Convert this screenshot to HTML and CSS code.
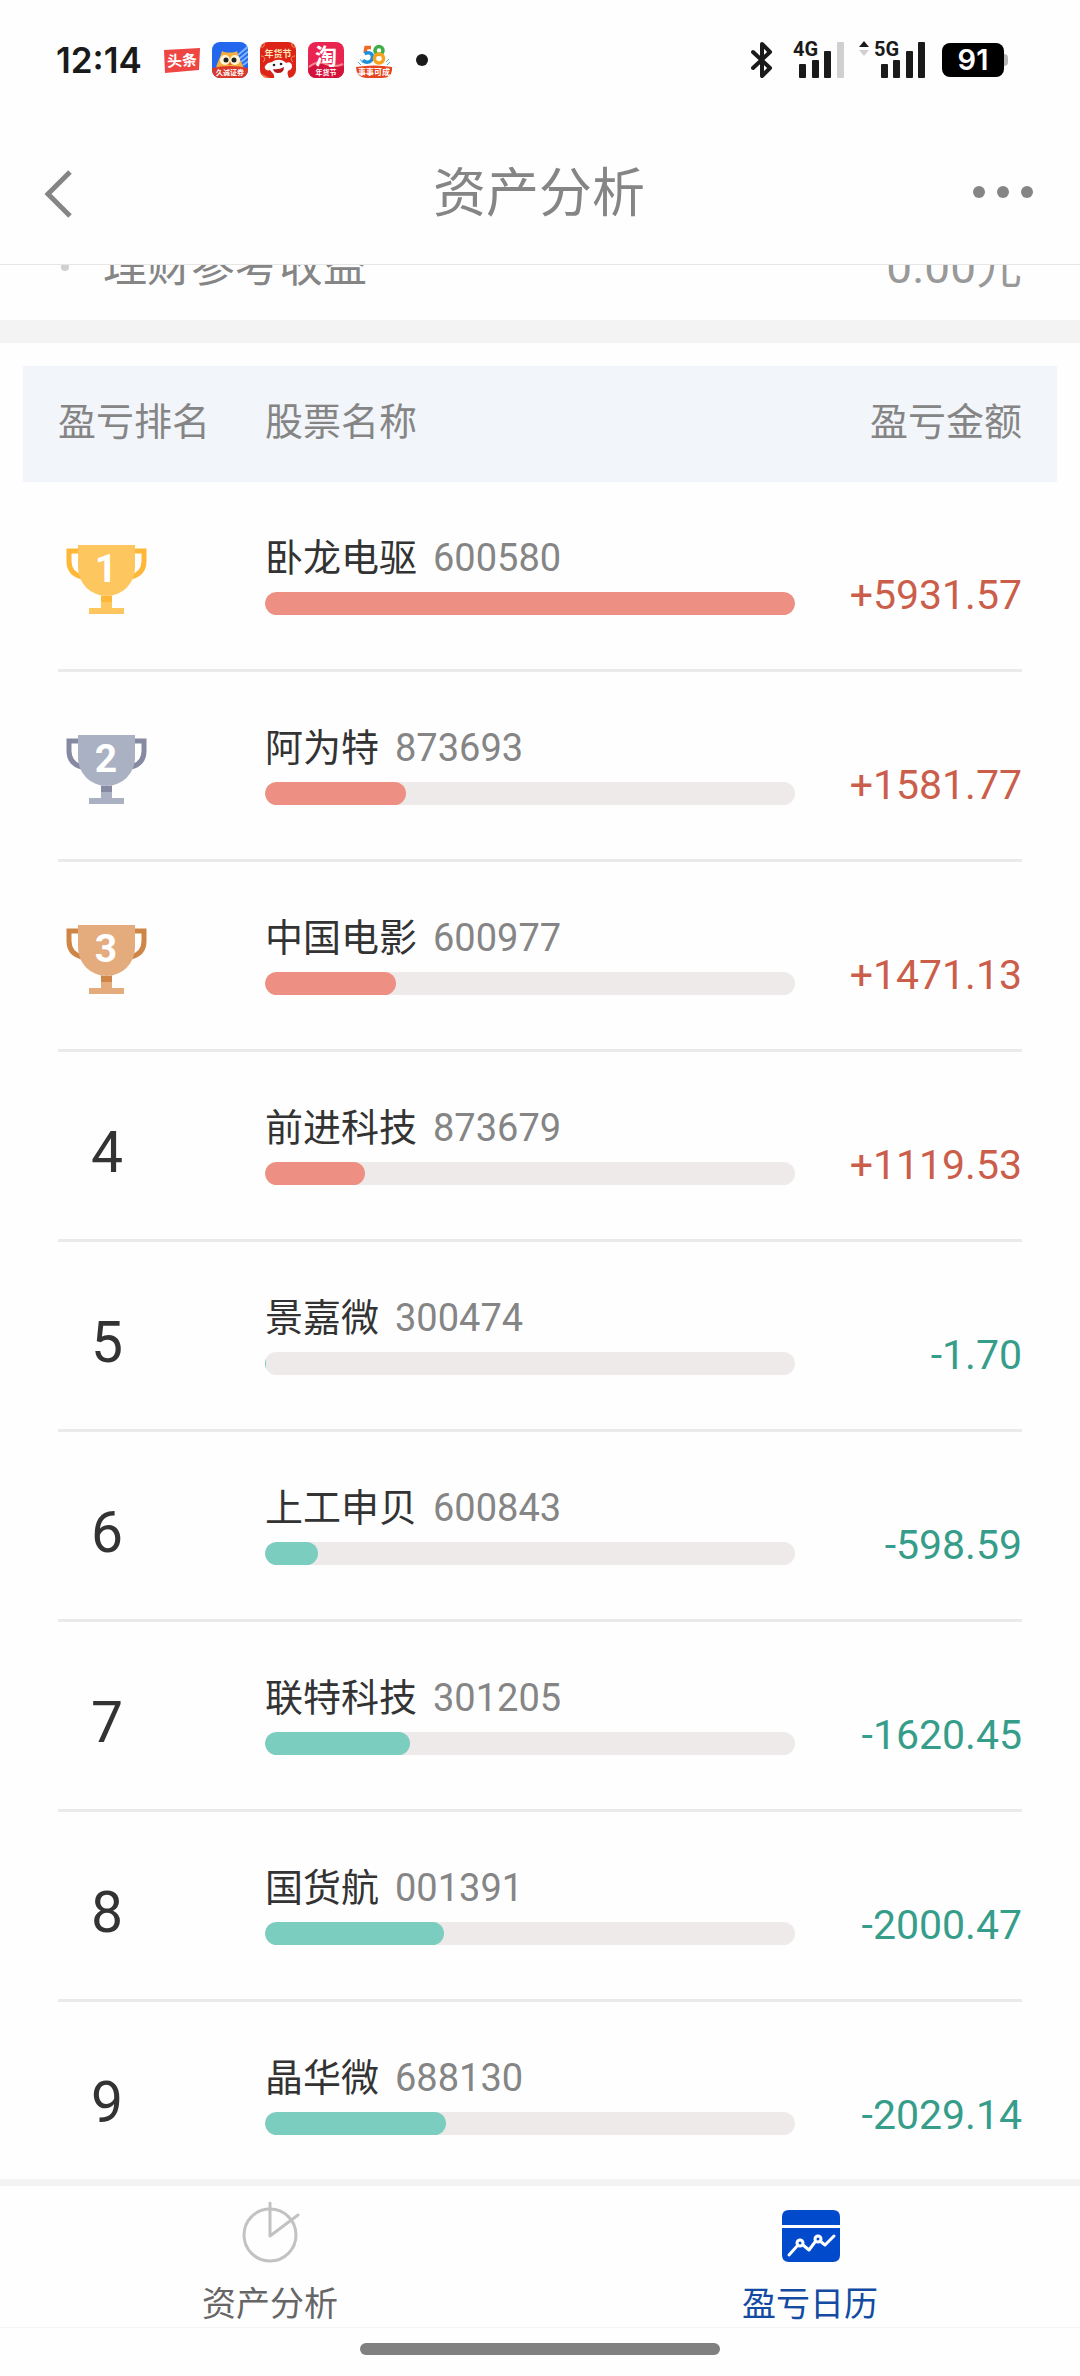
FILE: index.html
```html
<!DOCTYPE html>
<html lang="zh-CN">
<head>
<meta charset="utf-8">
<meta name="viewport" content="width=device-width, initial-scale=1">
<title>资产分析</title>
<link rel="stylesheet" href="styles.css">
</head>
<body>
<svg class="defs" width="0" height="0" aria-hidden="true">
  <symbol id="cup" viewBox="0 0 82 72">
    <g fill="none" stroke="var(--cup-dark)" stroke-width="5">
      <path d="M13 8H3V18C3 27 8 32 16 34"/>
      <path d="M68 8H78V18C78 27 73 32 65 34"/>
    </g>
    <path fill="var(--cup)" d="M12 2H69V24.500A28.500 28.500 0 0 1 12 24.500Z"/>
    <path fill="var(--cup-dark)" d="M35 52.500Q40.500 53.500 46 52.500V59H35Z"/>
    <path fill="var(--cup)" d="M35 59H46V65H58V71H23V65H35Z"/>
  </symbol>
</svg>

<div class="status">
  <span class="clock">12:14</span>
  <div class="notices">
    <svg width="36" height="36" viewBox="0 0 36 36" role="img" aria-label="头条">
      <path d="M0 8L36 6L35 28L1 31Z" fill="#ee4643"/>
      <text x="18" y="24" class="app-text" font-size="15" transform="rotate(-3 18 18)">头条</text>
    </svg>
    <svg width="36" height="36" viewBox="0 0 36 36" role="img" aria-label="久诚证券">
      <clipPath id="round"><rect width="36" height="36" rx="8"/></clipPath>
      <g clip-path="url(#round)">
        <rect width="36" height="36" fill="#2267ee"/>
        <path d="M26 13L38 3M27 17L38 8M29 20L38 13M31 23L38 18" stroke="#7fb4ff" stroke-width="2"/>
        <path d="M4 27C5 20 8 17 10 9C13 11 22 11 25 9C27 17 30 20 32 27Z" fill="#f7ae3e"/>
        <circle cx="13" cy="18" r="5" fill="#fff4d5"/><circle cx="23" cy="18" r="5" fill="#fff4d5"/>
        <circle cx="14" cy="18" r="2.500" fill="#222"/><circle cx="22" cy="18" r="2.500" fill="#222"/>
        <path d="M18 20L16 23H20Z" fill="#e2662a"/>
        <path d="M0 26Q18 22 36 26V36H0Z" fill="#d9392b"/>
      </g>
      <text x="18" y="33" class="app-text" font-size="7">久诚证券</text>
    </svg>
    <svg width="36" height="36" viewBox="0 0 36 36" role="img" aria-label="年货节">
      <g clip-path="url(#round)">
        <rect width="36" height="36" fill="#dd2418"/>
        <path d="M1 14C5 14 6 18 3 20M35 14C31 14 30 18 33 20M1 5Q5 6 4 1M35 5Q31 6 32 1" stroke="#f39a62" stroke-width="1" fill="none"/>
        <path d="M12 20C17 16 24 18 26 21C32 18 34 26 30 28C27 28 27 32 29 36H14C15 32 12 31 10 28C6 30 3 25 6 23C8 20 10 21 12 20Z" fill="#fff"/>
        <circle cx="14" cy="23" r="1.300" fill="#222"/><circle cx="21" cy="22" r="1.300" fill="#222"/>
        <path d="M13 27Q19 28 24 25Q24 31 18 31Q14 31 13 27Z" fill="#b3191a"/>
        <path d="M0 31L10 36H0Z" fill="#ef7c46"/>
      </g>
      <text x="18" y="15" class="app-text cream" font-size="9">年货节</text>
    </svg>
    <svg width="36" height="36" viewBox="0 0 36 36" role="img" aria-label="淘宝年货节">
      <g clip-path="url(#round)">
        <rect width="36" height="36" fill="#e92450"/>
        <path d="M0 27Q9 20 18 23T36 24V36H0Z" fill="#d3123c"/>
        <path d="M1 25Q9 18 18 22T35 22" stroke="#f58b8e" stroke-width="2" fill="none"/>
      </g>
      <text x="18" y="22" class="app-text" font-size="22">淘</text>
      <text x="18" y="33" class="app-text" font-size="7">年货节</text>
    </svg>
    <svg width="36" height="36" viewBox="0 0 36 36" role="img" aria-label="58 事事可成">
      <path d="M15 5.500H10L9 11" fill="none" stroke="#ef6a25" stroke-width="3.500"/>
      <path d="M8.500 11.500C15 9 17.500 13 16 17C14.500 21 9 21 7 18" fill="none" stroke="#1e8fda" stroke-width="3.500"/>
      <circle cx="23" cy="8.500" r="4" fill="none" stroke="#3fae49" stroke-width="3.500"/>
      <circle cx="23" cy="16.500" r="4.500" fill="none" stroke="#f6a21c" stroke-width="3.500"/>
      <path d="M2 20L5 23M4 17L7 21M34 20L31 23M33 17L30 20" stroke="#4cb5d8" stroke-width="1"/>
      <path d="M0 25Q18 22 36 25Q37 36 26 36H10Q0 35 0 25Z" fill="#e5451f"/>
      <text x="18" y="33" class="app-text" font-size="8">事事可成</text>
    </svg>
  </div>
  <span class="more-notices"></span>

  <div class="signals">
    <svg width="22" height="38" viewBox="0 0 22 38" role="img" aria-label="蓝牙">
      <path d="M2 11L19 27L11 35V3L19 11L2 27" fill="none" stroke="#1a1a1a" stroke-width="4" stroke-linejoin="round" stroke-linecap="round"/>
    </svg>
    <svg class="sig-4g" width="52" height="48" viewBox="0 -5 52 48" role="img" aria-label="4G">
      <text x="0" y="15" class="net-text">4G</text>
      <g fill="#1a1a1a"><rect x="6" y="23" width="7" height="14" rx="1"/><rect x="19" y="19" width="7" height="18" rx="1"/><rect x="31" y="10" width="7" height="27" rx="1"/></g>
      <rect x="44" y="1" width="7" height="36" rx="1" fill="#d0d0d0"/>
    </svg>
    <svg class="sig-5g" width="67" height="48" viewBox="0 -5 67 48" role="img" aria-label="5G">
      <path d="M0 6L5 0L10 6Z" fill="#1a1a1a"/><path d="M0 9L5 15L10 9Z" fill="#d0d0d0"/>
      <text x="15" y="15" class="net-text">5G</text>
      <g fill="#1a1a1a"><rect x="22" y="23" width="7" height="14" rx="1"/><rect x="34" y="19" width="7" height="18" rx="1"/><rect x="47" y="10" width="7" height="27" rx="1"/><rect x="59" y="1" width="7" height="36" rx="1"/></g>
    </svg>
    <span class="battery">91</span>
  </div>
</div>

<header class="topbar">
  <button class="icon-button" type="button" aria-label="返回">
    <svg width="28" height="48" viewBox="0 0 28 48"><path d="M26 2L4 24L26 46" fill="none" stroke="#858585" stroke-width="5"/></svg>
  </button>
  <h1 class="title">资产分析</h1>
  <button class="icon-button icon-button-end" type="button" aria-label="更多">
    <svg width="62" height="18" viewBox="0 0 62 18" fill="#858585"><circle cx="7" cy="7" r="6"/><circle cx="31" cy="7" r="6"/><circle cx="55" cy="7" r="6"/></svg>
  </button>
</header>

<main class="content">
  <div class="summary">
    <span class="bullet"></span>
    <span class="summary-label">理财参考收益</span>
    <span class="summary-value">0.00元</span>
  </div>

  <section class="ranking">
    <table class="table">
      <thead>
        <tr class="head"><th>盈亏排名</th><th>股票名称</th><th class="end">盈亏金额</th></tr>
      </thead>
      <tbody>
        <tr class="row">
          <td class="rank"><svg class="trophy gold" role="img" aria-label="1"><use href="#cup"/><text x="40" y="39">1</text></svg></td>
          <td class="stock"><div class="stock-line"><span>卧龙电驱</span><span class="code">600580</span></div><div class="track"><div class="fill up" style="width:100%"></div></div></td>
          <td class="amount up-text">+5931.57</td>
        </tr>
        <tr class="row">
          <td class="rank"><svg class="trophy silver" role="img" aria-label="2"><use href="#cup"/><text x="40" y="39">2</text></svg></td>
          <td class="stock"><div class="stock-line"><span>阿为特</span><span class="code">873693</span></div><div class="track"><div class="fill up" style="width:26.67%"></div></div></td>
          <td class="amount up-text">+1581.77</td>
        </tr>
        <tr class="row">
          <td class="rank"><svg class="trophy bronze" role="img" aria-label="3"><use href="#cup"/><text x="40" y="39">3</text></svg></td>
          <td class="stock"><div class="stock-line"><span>中国电影</span><span class="code">600977</span></div><div class="track"><div class="fill up" style="width:24.8%"></div></div></td>
          <td class="amount up-text">+1471.13</td>
        </tr>
        <tr class="row">
          <td class="rank">4</td>
          <td class="stock"><div class="stock-line"><span>前进科技</span><span class="code">873679</span></div><div class="track"><div class="fill up" style="width:18.87%"></div></div></td>
          <td class="amount up-text">+1119.53</td>
        </tr>
        <tr class="row">
          <td class="rank">5</td>
          <td class="stock"><div class="stock-line"><span>景嘉微</span><span class="code">300474</span></div><div class="track"><div class="fill down" style="width:0.03%"></div></div></td>
          <td class="amount down-text">-1.70</td>
        </tr>
        <tr class="row">
          <td class="rank">6</td>
          <td class="stock"><div class="stock-line"><span>上工申贝</span><span class="code">600843</span></div><div class="track"><div class="fill down" style="width:10.09%"></div></div></td>
          <td class="amount down-text">-598.59</td>
        </tr>
        <tr class="row">
          <td class="rank">7</td>
          <td class="stock"><div class="stock-line"><span>联特科技</span><span class="code">301205</span></div><div class="track"><div class="fill down" style="width:27.32%"></div></div></td>
          <td class="amount down-text">-1620.45</td>
        </tr>
        <tr class="row">
          <td class="rank">8</td>
          <td class="stock"><div class="stock-line"><span>国货航</span><span class="code">001391</span></div><div class="track"><div class="fill down" style="width:33.73%"></div></div></td>
          <td class="amount down-text">-2000.47</td>
        </tr>
        <tr class="row">
          <td class="rank">9</td>
          <td class="stock"><div class="stock-line"><span>晶华微</span><span class="code">688130</span></div><div class="track"><div class="fill down" style="width:34.21%"></div></div></td>
          <td class="amount down-text">-2029.14</td>
        </tr>
      </tbody>
    </table>
  </section>
</main>

<nav class="tabs">
  <a class="tab" href="#assets">
    <svg width="60" height="64" viewBox="0 0 60 64" fill="none" stroke="#c2c2c2" stroke-width="3" stroke-linecap="round" stroke-linejoin="round">
      <circle cx="30" cy="35" r="26"/><path d="M30 3V36L58 15"/>
    </svg>
    <span>资产分析</span>
  </a>
  <a class="tab tab-active" href="#calendar" aria-current="page">
    <svg width="60" height="64" viewBox="0 0 60 64">
      <path fill="#004acb" d="M2 25V17Q2 10 9 10H53Q60 10 60 17V25ZM2 28H60V55Q60 62 53 62H9Q2 62 2 55Z"/>
      <g fill="none" stroke="#fff" stroke-width="3" stroke-linecap="round" stroke-linejoin="round">
        <path d="M9 55L18 45M23 45L29 50L35 42M40 41L45 45L54 36"/>
        <circle cx="20" cy="43" r="3"/><circle cx="38" cy="39" r="3"/>
      </g>
    </svg>
    <span>盈亏日历</span>
  </a>
</nav>
<div class="home"><span class="home-bar"></span></div>
</body>
</html>
```
FILE: styles.css
```css
* { box-sizing: border-box; }

body {
  margin: 0;
  height: 100vh;
  display: flex;
  flex-direction: column;
  overflow: hidden;
  background: #fefefe;
  color: #333;
  font-family: Roboto, "Noto Sans CJK SC", sans-serif;
  font-size: 38px;
}

.defs { display: none; }

/* Status bar */
.status {
  flex: none;
  display: flex;
  align-items: center;
  height: 120px;
  padding: 0 76px 0 56px;
}
.clock {
  width: 108px;
  font: 600 35px/40px Inter, sans-serif;
  color: #1a1a1a;
}
.notices { display: flex; gap: 12px; }
.app-text {
  font-family: "Noto Sans CJK SC", sans-serif;
  font-weight: 700;
  fill: #fff;
  text-anchor: middle;
}
.cream { fill: #ffe6b8; }
.more-notices {
  width: 12px;
  height: 12px;
  margin-left: 24px;
  border-radius: 50%;
  background: #1a1a1a;
}
.signals { display: flex; align-items: center; margin-left: auto; }
.sig-4g { margin-left: 20px; }
.sig-5g { margin-left: 14px; }
.net-text { font: 700 20px Roboto, sans-serif; fill: #1a1a1a; }
.battery {
  position: relative;
  width: 62px;
  height: 34px;
  margin-left: 16px;
  border-radius: 8px;
  background: #000;
  color: #fff;
  font: 600 29px/34px Inter, sans-serif;
  text-align: center;
}
.battery::after {
  content: "";
  position: absolute;
  left: 100%;
  top: 11px;
  width: 4px;
  height: 12px;
  border-radius: 0 4px 4px 0;
  background: #b5b5b5;
}

/* Title bar */
.topbar {
  flex: none;
  display: grid;
  grid-template-columns: 1fr auto 1fr;
  align-items: center;
  height: 145px;
  padding: 4px 46px 0 44px;
  border-bottom: 1px solid #e6e6e6;
}
.title {
  margin: 0;
  font-size: 53px;
  font-weight: 400;
  line-height: 64px;
  color: #858585;
}
.icon-button {
  display: flex;
  justify-self: start;
  padding: 0;
  border: 0;
  background: none;
}
.icon-button-end { justify-self: end; }

/* Scrolled content */
.content { flex: 1; min-height: 0; overflow: hidden; }
.summary {
  display: flex;
  align-items: center;
  height: 110px;
  margin-top: -55px;
  padding: 4px 58px 0;
  font-size: 44px;
  line-height: 56px;
  color: #858585;
}
.bullet {
  width: 8px;
  height: 8px;
  margin: 0 34px 0 3px;
  border-radius: 50%;
  background: #d0d0d0;
}
.summary-value { margin-left: auto; font-size: 46px; color: #999; }

/* Ranking table */
.ranking { border-top: 23px solid #f3f3f3; padding: 23px 23px 0; }
.table, .table thead, .table tbody { display: block; }
.head, .row {
  display: grid;
  grid-template-columns: 207px 1fr 227px;
}
.head {
  height: 116px;
  padding: 32px 35px;
  background: #f2f5fa;
  color: #858585;
}
.head th { padding: 0; font-weight: 400; line-height: 48px; text-align: left; }
.head .end { text-align: right; }
.row {
  align-items: end;
  margin: 0 35px;
  padding: 54px 0 54px;
  border-bottom: 3px solid #eaeaea;
}
.row td { padding: 0; }
.rank {
  width: 98px;
  font-size: 57px;
  line-height: 64px;
  text-align: center;
}
.trophy { display: block; width: 82px; height: 72px; margin: 0 auto; }
.trophy text {
  font-size: 39px;
  font-weight: 700;
  fill: #fff;
  text-anchor: middle;
}
.gold { --cup: #fec65e; --cup-dark: #ffb738; }
.silver { --cup: #a9b1c2; --cup-dark: #8589a1; }
.bronze { --cup: #e4ab7d; --cup-dark: #cf8545; }
.stock-line {
  display: flex;
  gap: 16px;
  margin-bottom: 12px;
  line-height: 44px;
}
.code { color: #858585; }
.track {
  height: 23px;
  border-radius: 12px;
  background: #eeeae9;
  overflow: hidden;
}
.fill { height: 100%; min-width: 1px; border-radius: 12px; }
.up { background: #ed8f82; }
.down { background: #7bcdbf; }
.amount { font-size: 41px; line-height: 40px; text-align: right; }
.up-text { color: #cb5e4b; }
.down-text { color: #359d8a; }

/* Bottom tabs */
.tabs {
  flex: none;
  display: grid;
  grid-template-columns: 1fr 1fr;
  height: 149px;
  border-top: 7px solid #f3f3f3;
  border-bottom: 1px solid #f5f5f5;
}
.tab {
  display: flex;
  flex-direction: column;
  align-items: center;
  gap: 18px;
  padding-top: 14px;
  font-size: 34px;
  line-height: 44px;
  color: #666;
  text-decoration: none;
}
.tab svg { flex: none; }
.tab-active { color: #134aa2; }
.home { flex: none; display: flex; justify-content: center; height: 48px; padding-top: 15px; }
.home-bar { width: 33.333%; height: 12px; border-radius: 6px; background: #808080; }
```
